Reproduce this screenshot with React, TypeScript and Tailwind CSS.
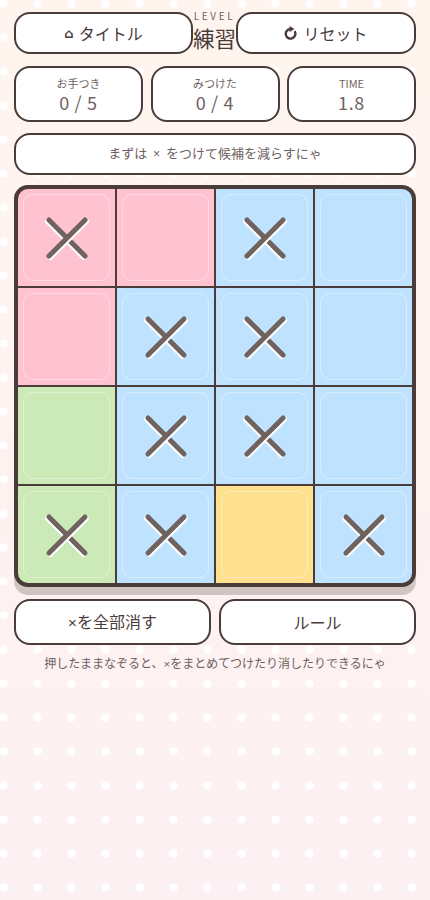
const cellColors: Record<string, string> = {
  p: "bg-[#ffc2d1]",
  b: "bg-[#bfe3ff]",
  g: "bg-[#cbeab8]",
  y: "bg-[#ffe08e]",
};

const cells = [
  ["p", true], ["p", false], ["b", true], ["b", false],
  ["p", false], ["b", true], ["b", true], ["b", false],
  ["g", false], ["b", true], ["b", true], ["b", false],
  ["g", true], ["b", true], ["y", false], ["b", true],
] as const;

const btn = "flex items-center justify-center rounded-2xl border-2 border-[#4a3c39] bg-white text-[#4a3c39]";

// the × in the original font is much smaller than the CJK one
function Times() {
  return <span className="font-['Liberation_Sans'] text-[0.95em]">×</span>;
}

function Cross() {
  return (
    <>
      <span className="absolute left-1/2 top-1/2 h-[5px] w-[56px] -translate-x-1/2 -translate-y-1/2 rotate-45 rounded-full bg-[#6f625f] shadow-[0_2px_0_#fff]" />
      <span className="absolute left-1/2 top-1/2 h-[5px] w-[56px] -translate-x-1/2 -translate-y-1/2 -rotate-45 rounded-full bg-[#6f625f] shadow-[0_2px_0_#fff]" />
    </>
  );
}

function Stat({ label, value }: { label: string; value: string }) {
  return (
    <div className={`${btn} h-[56px] flex-col pt-[2px]`}>
      <span className="text-[11px] leading-[14px] text-[#6f625f]">{label}</span>
      <span className="text-[18px] leading-[24px] tracking-[0.7px] text-[#6f625f]">{value}</span>
    </div>
  );
}

export default function App() {
  return (
    <div
      className="min-h-[900px] bg-[radial-gradient(circle,#fff_4px,transparent_4.5px),linear-gradient(180deg,#fff5ee,#fdf0f3)] bg-[size:34px_34px,100%_100%] bg-[position:-13.5px_-13.5px,0_0] px-[14px] pt-[12px]"
      style={{ fontFamily: '"Noto Sans CJK JP", "Noto Sans", sans-serif' }}
    >
      <div className="flex h-[42px] items-stretch">
        <button className={`${btn} w-[179px] gap-[5px] text-[16px]`}>
          <span className="font-['DejaVu_Sans'] text-[13px] font-bold leading-none">⌂</span>
          タイトル
        </button>
        <div className="flex w-[43px] flex-col items-center text-[#4a3c39]">
          <span className="-mt-[1px] text-[10px] leading-[10px] tracking-[2.6px] text-[#6f625f]">LEVEL</span>
          <span className="mt-[3px] whitespace-nowrap text-[21.5px] leading-[28px]">練習</span>
        </div>
        <button className={`${btn} w-[180px] gap-[5px] text-[16px]`}>
          <svg viewBox="0 0 14 14" className="h-[14px] w-[14px]" fill="none" stroke="#4a3c39" strokeWidth="2.4">
            <path d="M10.6 5.2 A4.8 4.8 0 1 1 6.2 3" />
            <path d="M5.6 0 L10.4 3 L5.6 6 Z" fill="#4a3c39" stroke="none" />
          </svg>
          リセット
        </button>
      </div>

      <div className="mt-[12px] grid grid-cols-3 gap-[7.5px]">
        <Stat label="お手つき" value="0 / 5" />
        <Stat label="みつけた" value="0 / 4" />
        <Stat label="TIME" value="1.8" />
      </div>

      <div className={`${btn} mt-[11px] h-[42px] pb-[2px] text-[13px] text-[#6f625f]`}>
        <span className="whitespace-pre">まずは  <Times />  をつけて候補を減らすにゃ</span>
      </div>

      <div className="mt-[10px] grid grid-cols-4 gap-[2px] overflow-hidden rounded-[14px] border-4 border-[#4a3c39] bg-[#4a3c39] shadow-[0_8px_0_rgba(74,60,57,0.25)]">
        {cells.map(([color, marked], i) => (
          <div key={i} className={`relative h-[97px] ${cellColors[color]}`}>
            <div className="absolute inset-[5px] rounded-[10px] border border-white/40" />
            {marked && <Cross />}
          </div>
        ))}
      </div>

      <div className="mt-[12px] grid grid-cols-2 gap-[8px]">
        <button className={`${btn} h-[46px] text-[16px]`}>
          <span><Times />を全部消す</span>
        </button>
        <button className={`${btn} h-[46px] text-[16px]`}>ルール</button>
      </div>

      <p className="mt-[9px] text-center text-[12px] leading-[18px] text-[#6f625f]">
        押したままなぞると、<Times />をまとめてつけたり消したりできるにゃ
      </p>
    </div>
  );
}
